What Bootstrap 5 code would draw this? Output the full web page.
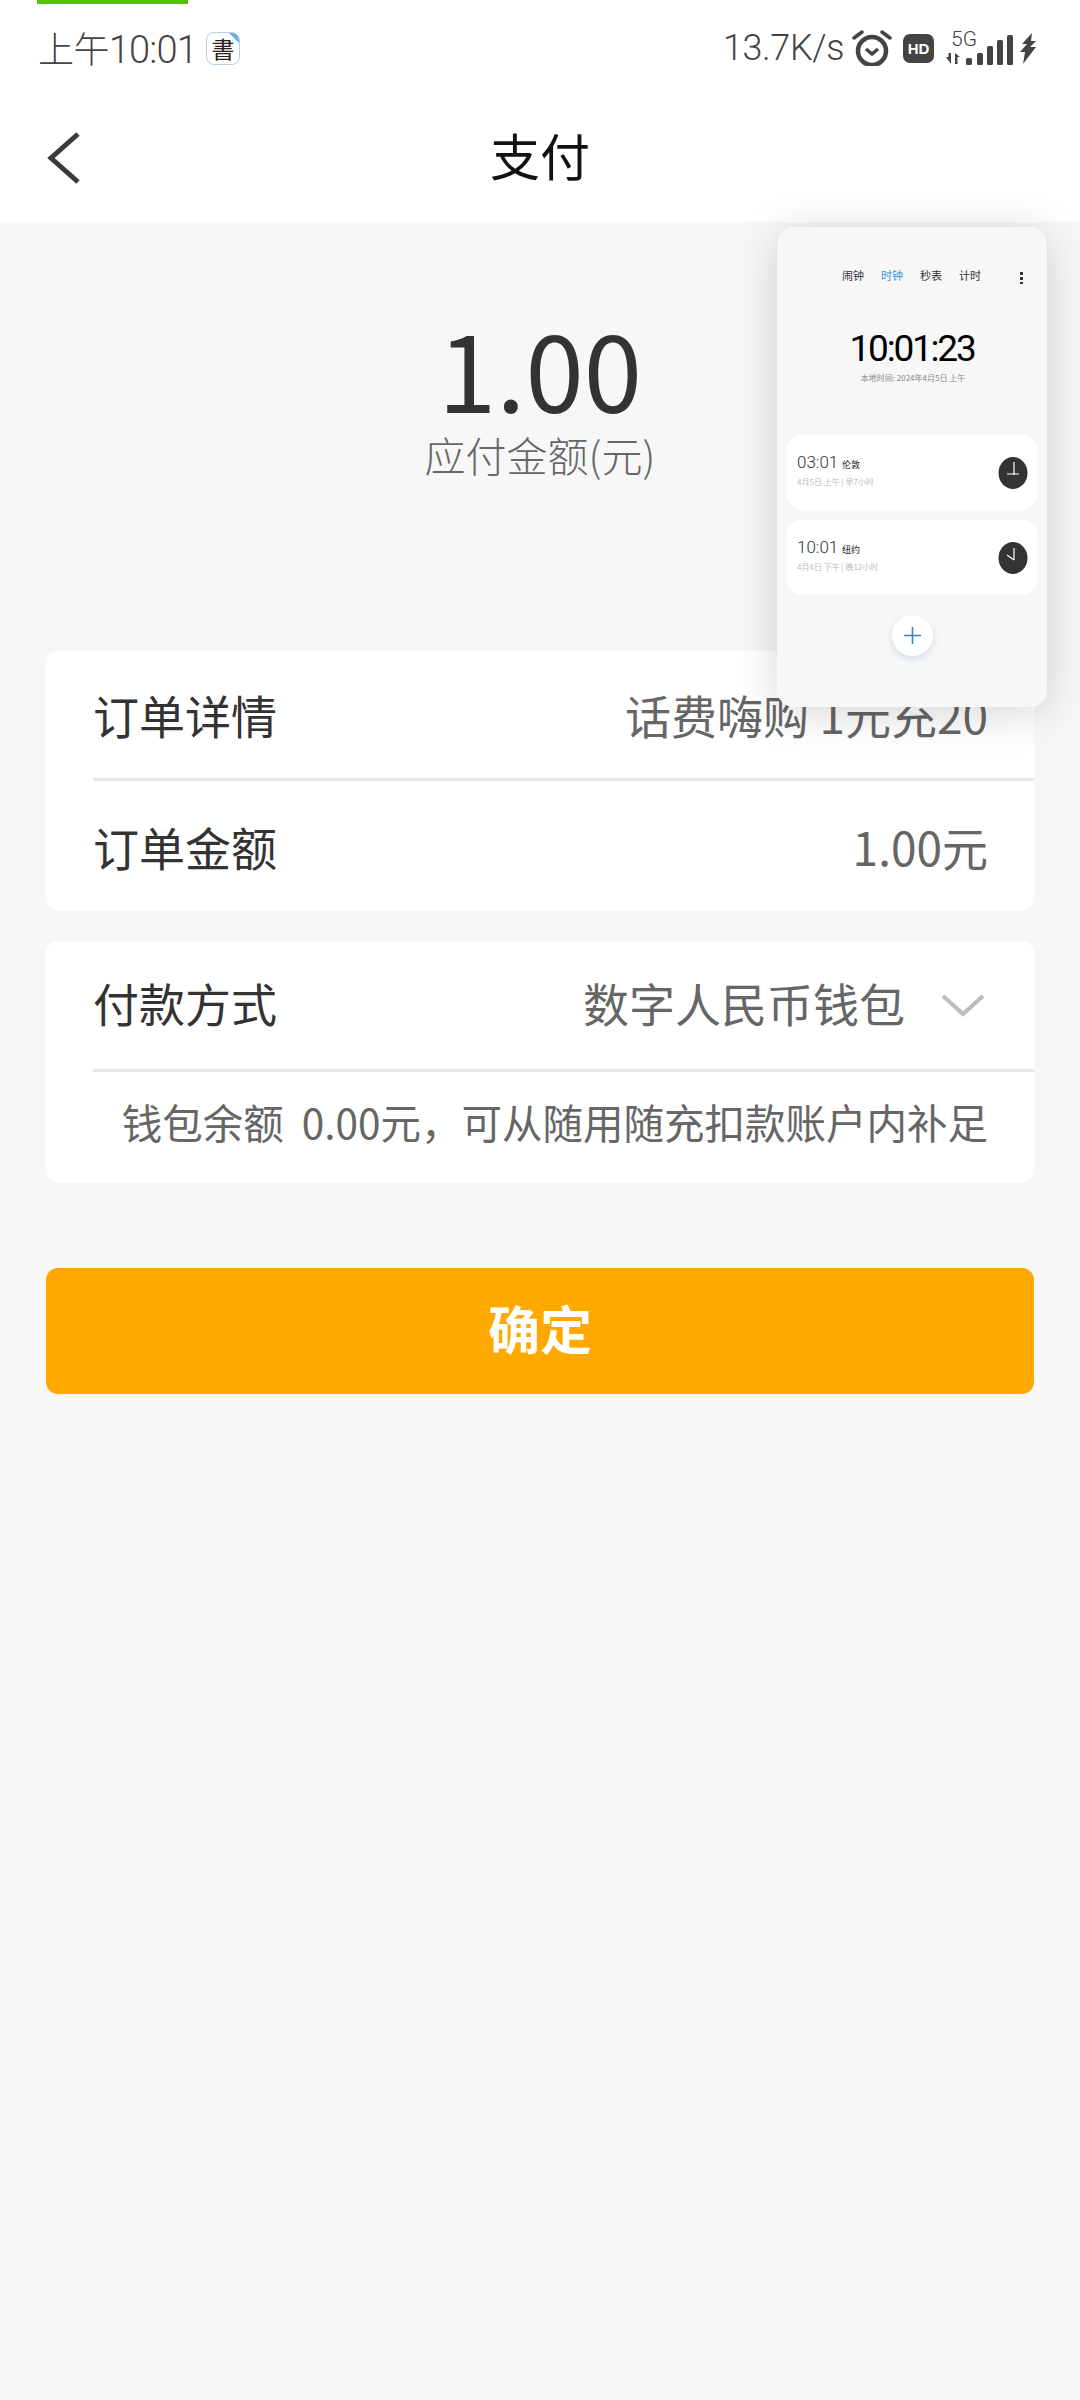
<!DOCTYPE html>
<html lang="zh-CN">
  <head>
    <meta charset="UTF-8" />
    <meta name="viewport" content="width=device-width, initial-scale=1.0" />
    <title>支付</title>
    <link href="https://cdn.jsdelivr.net/npm/bootstrap@5.3.3/dist/css/bootstrap.min.css" rel="stylesheet" />
    <style>
      body {
        background-color: #f7f7f7;
        font-family: "Noto Sans CJK SC", "Noto Sans", sans-serif;
        color: #333;
      }
      .page { position: relative; min-height: 2400px; overflow: hidden; }

      /* status bar */
      .top-strip { width: 151px; height: 4px; margin-left: 37px; background: #4fc600; }
      .status-row { height: 88px; padding: 0 43px 0 38px; color: #444; }
      .status-time { font-size: 36px; line-height: 46px; font-weight: 300; letter-spacing: -0.6px; }
      .status-time b { font-family: Roboto, sans-serif; font-weight: 300; font-size: 38px; letter-spacing: -0.8px; }
      .app-badge {
        position: relative; width: 34px; height: 33px; margin-left: 9px; border: 1.5px solid #b6cfe2; border-radius: 8px;
        font-size: 23px; line-height: 30px; text-align: center; color: #2a2018; overflow: hidden; background: #fff;
      }
      .app-badge::after {
        content: ""; position: absolute; top: 0; right: 0;
        border-top: 10px solid #6aaee0; border-left: 10px solid transparent;
      }
      .net-speed { font-family: Roboto, sans-serif; font-size: 36px; font-weight: 300; line-height: 46px; margin-right: 8px; letter-spacing: -0.4px; }
      .hd-icon { margin-left: 11px; }
      .five-g-box { position: relative; width: 68px; height: 34px; margin-left: 12px; }
      .five-g { position: absolute; left: 5px; top: -1px; font-family: Roboto, sans-serif; font-size: 21px; line-height: 18px; font-weight: 300; }
      .bolt-icon { margin-left: 6px; }

      /* header */
      .title-bar { position: relative; height: 130px; padding-bottom: 6px; background: #fff; z-index: 2; }
      .title-bar h1 { font-size: 50px; font-weight: 400; color: #111; margin: 0; line-height: 1; }
      .back-btn { position: absolute; left: 46px; top: 40px; }

      /* amount */
      .amount-box { padding-top: 85px; height: 429px; text-align: center; }
      .amount-num { font-size: 105px; line-height: 120px; color: #333; }
      .amount-lbl { font-size: 41px; line-height: 50px; color: #666; margin-top: 2px; font-weight: 300; }

      /* cards */
      .pay-wrap { padding: 0 46px; }
      .pay-card { background: #fff; border-radius: 12px; }
      .pay-row { height: 127px; padding-left: 47px; padding-right: 46px; font-size: 46px; }
      .pay-row.tall { height: 130px; }
      .pay-row.mid { height: 128px; padding-bottom: 5px; }
      .pay-row .val { color: #666; font-size: 46px; }
      .row-line { height: 3px; margin-left: 47px; background: #e6e6e6; }
      .note-row { height: 111px; padding-right: 46px; padding-bottom: 11px; font-size: 40.5px; color: #666; white-space: pre; }
      .gap-card { margin-top: 30px; }
      .chevron-icon { margin-left: 36px; margin-right: 3px; position: relative; top: 2px; }
      .ok-btn {
        display: block; width: 100%; height: 126px; margin-top: 85px; padding-bottom: 8px; background: #ffa900; border: 0; border-radius: 12px;
        color: #fff; font-size: 52px; font-weight: 700;
      }

      /* recent-app window */
      .float-win {
        position: absolute; left: 777px; top: 227px; width: 270px; height: 480px; z-index: 3;
        background: #f7f7f7; border-radius: 17px; padding: 0 9px; box-shadow: 0 6px 44px rgba(0, 0, 0, .17);
      }
      .win-tabs { height: 98px; padding: 40px 15px 0 56px; font-size: 11px; color: #333; }
      .win-tabs span.on { color: #3a93d0; }
      .win-gap { gap: 17px; }
      .win-dots { width: 3px; height: 13px; background: radial-gradient(circle, #333 1.5px, transparent 1.6px) 0 0 / 3px 5px repeat-y; }
      .win-clock { font-family: Roboto, sans-serif; font-size: 37px; line-height: 42px; color: #000; text-align: center; margin-top: 3px; letter-spacing: -2.2px; }
      .win-date { font-size: 8px; line-height: 12px; text-align: center; color: #888; margin-top: 2px; margin-left: 2px; }
      .city-card { height: 75px; background: #fff; border-radius: 16px; padding: 0 10px 0 11px; }
      .city-card + .city-card { margin-top: 10px; }
      .city-list { margin-top: 51px; }
      .city-info { padding-bottom: 6px; }
      .city-time { font-family: Roboto, sans-serif; font-weight: 300; font-size: 17px; line-height: 20px; color: #333; }
      .city-name { font-size: 9px; color: #222; margin-left: 4px; }
      .city-sub { font-size: 8px; line-height: 12px; color: #bbb; margin-top: 1px; }
      .plus-btn {
        width: 41px; height: 41px; margin: 20px auto 0; border-radius: 50%; background: #fff;
        box-shadow: 0 3px 7px rgba(120, 170, 210, .3);
      }
    </style>
  </head>
  <body>
    <div class="page">
      <!-- status bar -->
      <div class="bg-white">
        <div class="top-strip"></div>
        <div class="status-row d-flex align-items-center justify-content-between">
          <div class="d-flex align-items-center">
            <span class="status-time">上午<b>10:01</b></span>
            <span class="app-badge">書</span>
          </div>
          <div class="d-flex align-items-center">
            <span class="net-speed">13.7K/s</span>
            <svg width="40" height="36" viewBox="0 0 40 36" fill="none" stroke="#444">
              <circle cx="20" cy="21" r="14" stroke-width="4.5" />
              <path d="M14 19l6 5 6-5" stroke-width="3.5" />
              <path d="M2 8l8-6M38 8l-8-6" stroke-width="3.5" stroke-linecap="round" />
            </svg>
            <svg class="hd-icon" width="31" height="29" viewBox="0 0 31 29">
              <rect width="31" height="29" rx="7" fill="#444" />
              <text x="15.5" y="20" text-anchor="middle" font-family="Liberation Sans" font-weight="700" font-size="15" fill="#fff">HD</text>
            </svg>
            <div class="five-g-box">
              <span class="five-g">5G</span>
              <svg class="d-block" width="68" height="34" viewBox="0 0 68 34" fill="#444">
                <path d="M0 26h2.5v-4h2.5v11zM9 22v11h2.5v-7h2.5z" />
                <rect x="20" y="27" width="6" height="7" rx="1.5" />
                <rect x="31" y="22" width="6" height="12" rx="1.5" />
                <rect x="41" y="15" width="6" height="19" rx="1.5" />
                <rect x="51" y="9" width="6" height="25" rx="1.5" />
                <rect x="61" y="4" width="6" height="30" rx="1.5" />
              </svg>
            </div>
            <svg class="bolt-icon" width="17" height="31" viewBox="0 0 17 31" fill="#444">
              <path d="M12 0L2 11h5L0 19h5L3 31l13-17h-6l6-6h-5z" />
            </svg>
          </div>
        </div>
      </div>

      <!-- title -->
      <div class="title-bar d-flex align-items-center justify-content-center">
        <svg class="back-btn" width="34" height="52" viewBox="0 0 34 52" fill="none" stroke="#3a3a3a" stroke-width="5">
          <path d="M32 2L5 26l27 24" />
        </svg>
        <h1>支付</h1>
      </div>

      <!-- amount -->
      <div class="amount-box">
        <div class="amount-num">1.00</div>
        <div class="amount-lbl">应付金额(元)</div>
      </div>

      <!-- order + payment cards -->
      <div class="pay-wrap">
        <div class="pay-card">
          <div class="pay-row d-flex align-items-center justify-content-between">
            <span>订单详情</span><span class="val">话费嗨购 1元充20</span>
          </div>
          <div class="row-line"></div>
          <div class="pay-row tall d-flex align-items-center justify-content-between">
            <span>订单金额</span><span class="val">1.00元</span>
          </div>
        </div>

        <div class="pay-card gap-card">
          <div class="pay-row mid d-flex align-items-center justify-content-between">
            <span>付款方式</span>
            <span class="val d-flex align-items-center">数字人民币钱包
              <svg class="chevron-icon" width="44" height="24" viewBox="0 0 44 24" fill="none" stroke="#bdbdbd" stroke-width="4">
                <path d="M2 3l20 18L42 3" />
              </svg>
            </span>
          </div>
          <div class="row-line"></div>
          <div class="note-row d-flex align-items-center justify-content-end">钱包余额  0.00元，可从随用随充扣款账户内补足</div>
        </div>

        <button class="ok-btn" type="button">确定</button>
      </div>

      <!-- recent-app window over the page -->
      <div class="float-win">
        <div class="win-tabs d-flex justify-content-between">
          <div class="d-flex win-gap">
            <span>闹钟</span><span class="on">时钟</span><span>秒表</span><span>计时</span>
          </div>
          <div class="win-dots mt-1"></div>
        </div>
        <div class="win-clock">10:01:23</div>
        <div class="win-date">本地时间: 2024年4月5日 上午</div>
        <div class="city-list">
          <div class="city-card d-flex align-items-center justify-content-between">
            <div class="city-info">
              <div class="city-time">03:01<span class="city-name">伦敦</span></div>
              <div class="city-sub">4月5日 上午 | 早7小时</div>
            </div>
            <svg width="30" height="32" viewBox="0 0 30 32">
              <ellipse cx="15" cy="16" rx="14.5" ry="16" fill="#333" />
              <path d="M16 5v13M9 17h12" stroke="#fff" stroke-width="1.2" />
            </svg>
          </div>
          <div class="city-card d-flex align-items-center justify-content-between">
            <div class="city-info">
              <div class="city-time">10:01<span class="city-name">纽约</span></div>
              <div class="city-sub">4月4日 下午 | 晚12小时</div>
            </div>
            <svg width="30" height="32" viewBox="0 0 30 32">
              <ellipse cx="15" cy="16" rx="14.5" ry="16" fill="#333" />
              <path d="M16 6v12M16 18L9 13" stroke="#fff" stroke-width="1.2" />
            </svg>
          </div>
        </div>
        <div class="plus-btn d-flex align-items-center justify-content-center">
          <svg width="17" height="17" viewBox="0 0 17 17" stroke="#3a86bb" stroke-width="1.6">
            <path d="M8.5 0v17M0 8.5h17" />
          </svg>
        </div>
      </div>
    </div>

    <script src="https://cdn.jsdelivr.net/npm/bootstrap@5.3.3/dist/js/bootstrap.bundle.min.js"></script>
  </body>
</html>
